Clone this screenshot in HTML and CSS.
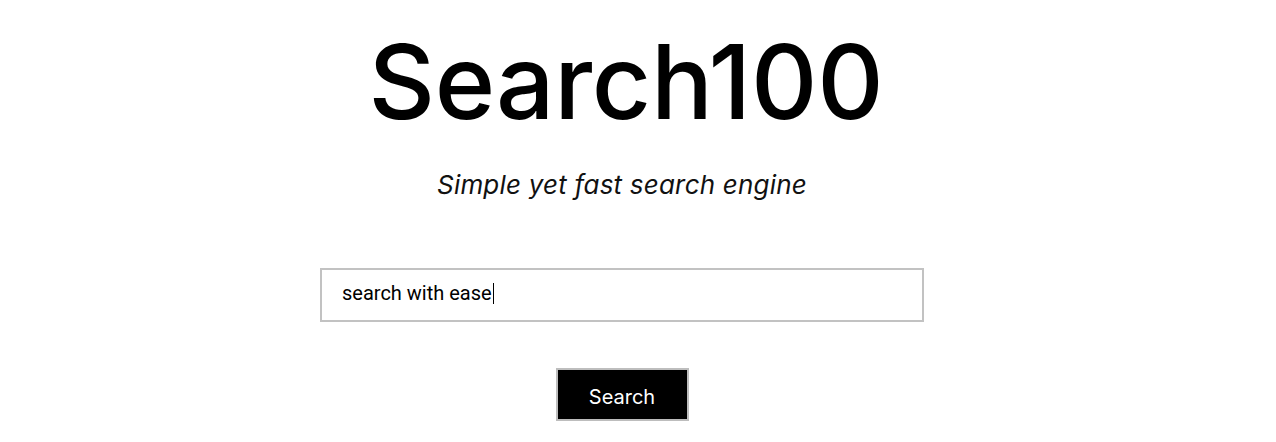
FILE: index.html
```html
<!DOCTYPE html>
<html lang="en">
<head>
<meta charset="utf-8">
<title>Search100</title>
<link rel="stylesheet" href="styles.css">
</head>
<body>
<main class="page">
  <h1 class="title">Search100</h1>
  <p class="tagline">Simple yet fast search engine</p>
  <form class="search-form">
    <div class="search-box"><span class="search-value">search with ease</span><span class="caret"></span></div>
    <button type="button" class="search-btn">Search</button>
  </form>
</main>
</body>
</html>
```
FILE: styles.css
```css
html, body {
  margin: 0;
  padding: 0;
  background: #ffffff;
}

.page {
  display: flex;
  flex-direction: column;
  align-items: center;
  padding: 0 32px 0 0;
  font-family: "Inter", "Noto Sans", sans-serif;
  color: #000;
}

.title {
  margin: 22px 0 0;
  padding-left: 8px;
  font-size: 103px;
  font-weight: 500;
  line-height: 120px;
  letter-spacing: -0.3px;
}

.tagline {
  margin: 28px 0 0;
  font-size: 26px;
  font-style: italic;
  font-weight: 400;
  line-height: 30px;
  letter-spacing: 0.2px;
  color: #111;
}

.search-form {
  display: flex;
  flex-direction: column;
  align-items: center;
  margin-top: 68px;
}

.search-box {
  box-sizing: border-box;
  width: 604px;
  height: 54px;
  border: 2px solid #c2c2c2;
  display: flex;
  align-items: center;
  padding: 0 0 4px 20px;
  font-family: "Roboto", sans-serif;
  font-size: 20px;
  color: #000;
}

.caret {
  display: inline-block;
  width: 1.5px;
  height: 21px;
  background: #000;
  margin-left: 1px;
}

.search-btn {
  box-sizing: border-box;
  margin-top: 46px;
  width: 133px;
  height: 53px;
  background: #000;
  color: #fff;
  border: 2px solid #bdbdbd;
  font-family: "Inter", "Noto Sans", sans-serif;
  font-size: 20px;
  font-weight: 400;
  padding: 4px 0 0;
  cursor: pointer;
}
```
